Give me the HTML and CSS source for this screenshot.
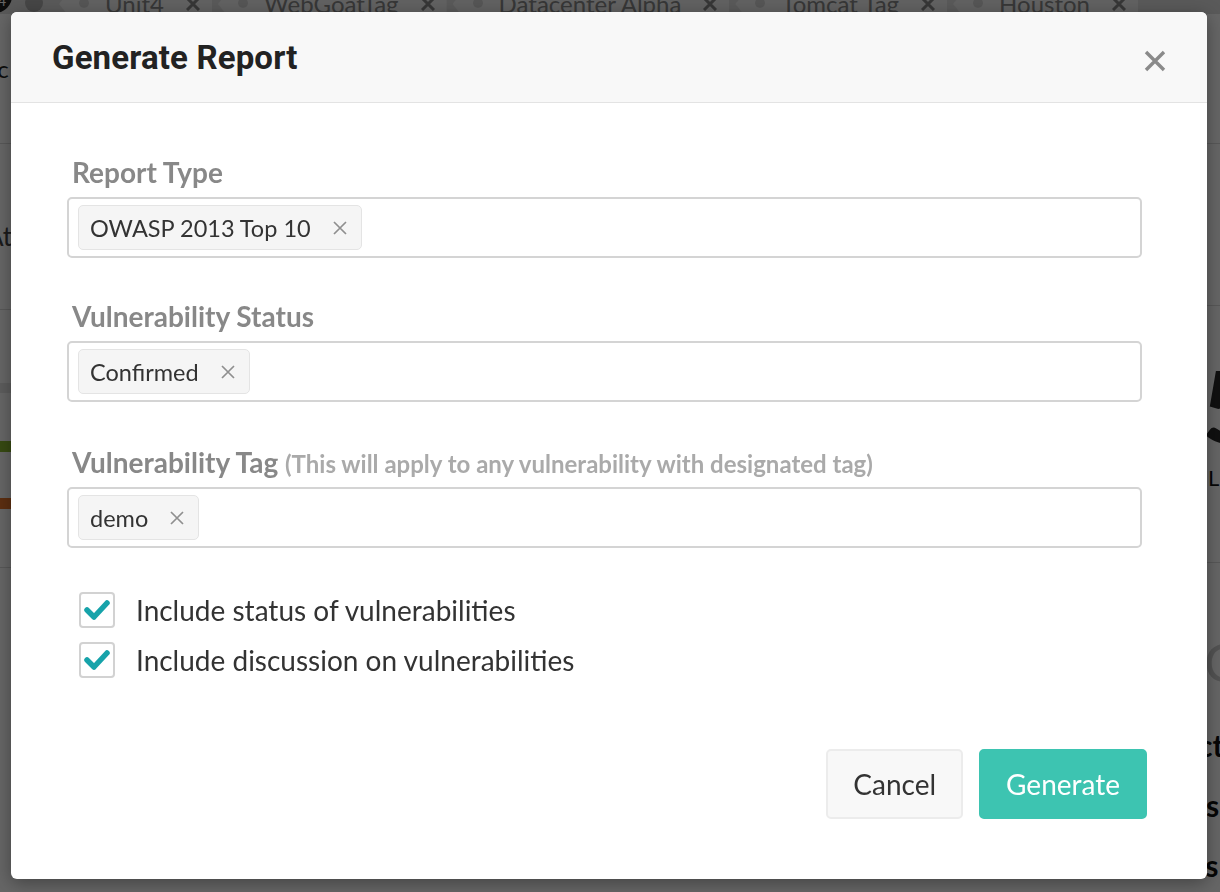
FILE: index.html
```html
<!DOCTYPE html>
<html lang="en">
<head>
<meta charset="utf-8">
<title>Generate Report</title>
<link rel="stylesheet" href="styles.css">
</head>
<body>
<div class="page">
  <div class="tagbar">
    <span class="avatar">4</span>
    <span class="dot"></span>
    <span class="chip"><i class="hole"></i>Unit4<svg class="cx" width="14" height="14" viewBox="0 0 14 14"><path d="M1 1 L13 13 M13 1 L1 13" stroke="#8a8a8a" stroke-width="3" fill="none"/></svg></span>
    <span class="chip"><i class="hole"></i>WebGoatTag<svg class="cx" width="14" height="14" viewBox="0 0 14 14"><path d="M1 1 L13 13 M13 1 L1 13" stroke="#8a8a8a" stroke-width="3" fill="none"/></svg></span>
    <span class="chip"><i class="hole"></i>Datacenter Alpha<svg class="cx" width="14" height="14" viewBox="0 0 14 14"><path d="M1 1 L13 13 M13 1 L1 13" stroke="#8a8a8a" stroke-width="3" fill="none"/></svg></span>
    <span class="chip"><i class="hole"></i>Tomcat Tag<svg class="cx" width="14" height="14" viewBox="0 0 14 14"><path d="M1 1 L13 13 M13 1 L1 13" stroke="#8a8a8a" stroke-width="3" fill="none"/></svg></span>
    <span class="chip"><i class="hole"></i>Houston<svg class="cx" width="14" height="14" viewBox="0 0 14 14"><path d="M1 1 L13 13 M13 1 L1 13" stroke="#8a8a8a" stroke-width="3" fill="none"/></svg></span>
  </div>
  <div class="main">
    <aside class="side left">
      <div class="row r1"><span class="frag dark">Acc</span></div>
      <div class="row r2"><span class="frag">Att</span></div>
      <div class="row r3">
        <span class="band gray"></span>
        <span class="band green"></span>
        <span class="band orange"></span>
      </div>
    </aside>
    <section class="center"></section>
    <aside class="side right">
      <div class="row r1"></div>
      <div class="row r2"></div>
      <div class="row r3">
        <span class="big">5</span>
        <span class="small">L</span>
      </div>
      <div class="rest">
        <span class="light">C</span>
        <span class="bold b1">ct</span>
        <span class="bold b2">s</span>
        <span class="bold b3">rs</span>
      </div>
    </aside>
  </div>
  <div class="footer">
    <span class="fcell dark1"></span>
    <span class="fcell line"></span>
    <span class="ficon"></span>
    <span class="fspace"></span>
    <span class="fcell dark2"></span>
    <span class="fcell line"></span>
    <span class="ficon"></span>
  </div>
</div>

<div class="overlay"></div>

<div class="modal" role="dialog">
  <header class="modal-header">
    <h2 class="modal-title">Generate Report</h2>
    <button class="close" aria-label="Close">
      <svg width="22" height="22" viewBox="0 0 22 22"><path d="M2 2 L20 20 M20 2 L2 20" stroke="#8a8a8a" stroke-width="3.4" stroke-linecap="butt" fill="none"/></svg>
    </button>
  </header>
  <div class="modal-body">
    <div class="field">
      <label class="label">Report Type</label>
      <div class="select">
        <span class="tag">OWASP 2013 Top 10<svg class="x" width="14" height="14" viewBox="0 0 14 14"><path d="M1 1 L13 13 M13 1 L1 13" stroke="#8f8f8f" stroke-width="1.7" fill="none"/></svg></span>
      </div>
    </div>
    <div class="field">
      <label class="label">Vulnerability Status</label>
      <div class="select">
        <span class="tag">Confirmed<svg class="x" width="14" height="14" viewBox="0 0 14 14"><path d="M1 1 L13 13 M13 1 L1 13" stroke="#8f8f8f" stroke-width="1.7" fill="none"/></svg></span>
      </div>
    </div>
    <div class="field">
      <label class="label">Vulnerability Tag <span class="hint">(This will apply to any vulnerability with designated tag)</span></label>
      <div class="select">
        <span class="tag">demo<svg class="x" width="14" height="14" viewBox="0 0 14 14"><path d="M1 1 L13 13 M13 1 L1 13" stroke="#8f8f8f" stroke-width="1.7" fill="none"/></svg></span>
      </div>
    </div>
    <div class="checks">
      <label class="check">
        <span class="box"><svg width="26" height="22" viewBox="0 0 26 22"><path d="M3 11 L10 18 L23 4" stroke="#16a3aa" stroke-width="5.5" stroke-linecap="round" stroke-linejoin="round" fill="none"/></svg></span>
        Include status of vulnerabilities
      </label>
      <label class="check">
        <span class="box"><svg width="26" height="22" viewBox="0 0 26 22"><path d="M3 11 L10 18 L23 4" stroke="#16a3aa" stroke-width="5.5" stroke-linecap="round" stroke-linejoin="round" fill="none"/></svg></span>
        Include discussion on vulnerabilities
      </label>
    </div>
    <div class="actions">
      <button class="btn btn-cancel">Cancel</button>
      <button class="btn btn-primary">Generate</button>
    </div>
  </div>
</div>
</body>
</html>
```

FILE: styles.css
```css
* { box-sizing: border-box; }

html, body {
  margin: 0;
  padding: 0;
  width: 1220px;
  height: 892px;
  overflow: hidden;
  font-family: "Lato", "Open Sans", sans-serif;
  color: #333;
}

/* ---------- background page ---------- */
.page {
  width: 1220px;
  height: 892px;
  background: #fff;
  display: flex;
  flex-direction: column;
  overflow: hidden;
}

.tagbar {
  height: 14px;
  flex: 0 0 14px;
  background: #e2e2e2;
  display: flex;
  align-items: flex-start;
  overflow: hidden;
}

.avatar {
  width: 34px;
  height: 34px;
  margin-left: -22px;
  margin-top: -21px;
  border-radius: 50%;
  background: #222;
  color: #fff;
  font-size: 14px;
  display: flex;
  align-items: flex-end;
  justify-content: flex-end;
  padding: 0 6px 4px 0;
  flex: 0 0 auto;
}

.dot {
  width: 18px;
  height: 18px;
  border-radius: 50%;
  background: #b0b0b0;
  margin-left: 13px;
  margin-top: -6px;
  flex: 0 0 auto;
}

.chip {
  position: relative;
  display: flex;
  align-items: center;
  height: 40px;
  margin-top: -16px;
  margin-left: 6px;
  padding: 0 12px 0 46px;
  background: #f4f4f4;
  clip-path: polygon(16px 0, 100% 0, 100% 100%, 16px 100%, 0 50%);
  font-size: 24px;
  line-height: 30px;
  color: #8a8a8a;
  white-space: nowrap;
  flex: 0 0 auto;
}
.dot + .chip { margin-left: 16px; }
.chip .cx { margin-left: 22px; flex: 0 0 auto; }
.hole {
  position: absolute;
  left: 20px;
  top: 14px;
  width: 10px;
  height: 10px;
  border-radius: 50%;
  background: #d8d8d8;
}

.main {
  flex: 1 1 auto;
  display: grid;
  grid-template-columns: 400px 1fr 300px;
}

.side { display: flex; flex-direction: column; }
.row { border-bottom: 1px solid #dcdcdc; position: relative; }
.left .r1 { height: 130px; display: flex; align-items: center; }
.left .r2 { height: 166px; display: flex; align-items: center; padding-top: 18px; }
.left .r3 { height: 258px; display: flex; flex-direction: column; padding-top: 73px; gap: 48px; }
.frag {
  font-size: 26px;
  margin-left: -14px;
  color: #444;
}
.frag.dark { color: #222; font-size: 24px; margin-left: -30px; margin-top: -20px; }
.band { display: block; height: 11px; width: 100%; }
.band.gray { background: #e8e8e8; height: 10px; }
.band.green { background: #8ab82e; }
.band.orange { background: #e9762b; margin-top: -2px; }

.right .r1 { height: 130px; }
.right .r2 { height: 162px; }
.right .r3 {
  height: 257px;
  padding-left: 282px;
  display: flex;
  flex-direction: column;
  padding-top: 50px;
}
.big { font-size: 100px; font-weight: 900; color: #2a2a2a; line-height: 96px; }
.small { font-size: 22px; color: #111; margin-top: 12px; margin-left: 6px; }
.rest { display: flex; flex-direction: column; padding-left: 284px; padding-top: 73px; }
.rest .light { font-size: 52px; color: #cfcfcf; line-height: 52px; }
.rest .bold { font-size: 30px; font-weight: 700; color: #111; line-height: 60px; }
.rest .b1 { margin-top: 27px; margin-left: -6px; }
.rest .b2 { margin-left: 2px; }
.rest .b3 { margin-left: -10px; }

.footer {
  flex: 0 0 12px;
  height: 12px;
  display: flex;
  background: #fff;
}
.fcell { display: block; height: 12px; }
.fcell.dark1 { width: 80px; margin-left: 131px; background: #d0d0d0; }
.fcell.line { width: 1px; margin-left: 60px; background: #bbb; }
.ficon { width: 36px; height: 6px; margin-left: 76px; border: 2px solid #111; border-top: none; }
.fspace { width: 456px; }
.fcell.dark2 { width: 78px; background: #d0d0d0; }

/* ---------- overlay ---------- */
.overlay {
  position: fixed;
  inset: 0;
  background: rgba(0, 0, 0, 0.6);
}

/* ---------- modal ---------- */
.modal {
  position: absolute;
  left: 11px;
  top: 12px;
  width: 1196px;
  background: #fff;
  border-radius: 6px;
  overflow: hidden;
  box-shadow: 0 4px 18px rgba(0, 0, 0, 0.35);
}

.modal-header {
  height: 91px;
  background: #f8f8f8;
  border-bottom: 1px solid #e3e3e3;
  display: flex;
  align-items: center;
  justify-content: space-between;
  padding: 0 41px 0 41px;
}

.modal-title {
  margin: 0;
  font-family: "Roboto", "Liberation Sans", sans-serif;
  font-weight: 700;
  font-size: 33px;
  color: #222;
  letter-spacing: 0.15px;
}

.close {
  border: 0;
  background: transparent;
  padding: 0;
  width: 22px;
  height: 22px;
  margin-top: 8px;
  display: flex;
}

.modal-body {
  padding: 54px 60px 60px 56px;
}

.field { margin-bottom: 43px; padding-right: 5px; }
.field:nth-child(2) { margin-bottom: 45px; }
.field:nth-child(3) { margin-bottom: 44px; }

.label {
  display: block;
  height: 30px;
  font-weight: 700;
  font-size: 28px;
  line-height: 30px;
  color: #888;
  padding-left: 5px;
  margin-bottom: 10px;
  white-space: nowrap;
}
.hint {
  font-size: 24px;
  line-height: 30px;
  color: #aaa;
}

.select {
  height: 61px;
  border: 2px solid #d4d4d4;
  border-radius: 5px;
  padding: 5px 9px;
  display: flex;
  align-items: center;
}

.tag {
  height: 45px;
  display: inline-flex;
  align-items: center;
  padding: 0 14px 0 11px;
  background: #f5f5f5;
  border: 1px solid #e4e4e4;
  border-radius: 5px;
  font-size: 23.5px;
  color: #333;
}
.tag .x { margin-left: 22px; }

.checks {
  display: flex;
  flex-direction: column;
  gap: 14px;
  padding-left: 12px;
}
.check {
  display: flex;
  align-items: center;
  height: 36px;
  font-size: 28px;
  color: #333;
}
.box {
  width: 36px;
  height: 36px;
  border: 2px solid #d2d2d2;
  border-radius: 4px;
  background: #fff;
  display: flex;
  align-items: center;
  justify-content: center;
  margin-right: 21px;
  flex: 0 0 auto;
}

.actions {
  display: flex;
  justify-content: flex-end;
  gap: 16px;
  margin-top: 71px;
}
.btn {
  height: 70px;
  padding: 0 25px;
  border-radius: 5px;
  font-family: "Lato", sans-serif;
  font-size: 28px;
  cursor: pointer;
}
.btn-cancel {
  background: #f8f8f8;
  border: 2px solid #ececec;
  color: #333;
}
.btn-primary {
  background: #3dc4b1;
  border: 2px solid #3dc4b1;
  color: #fff;
}
```
